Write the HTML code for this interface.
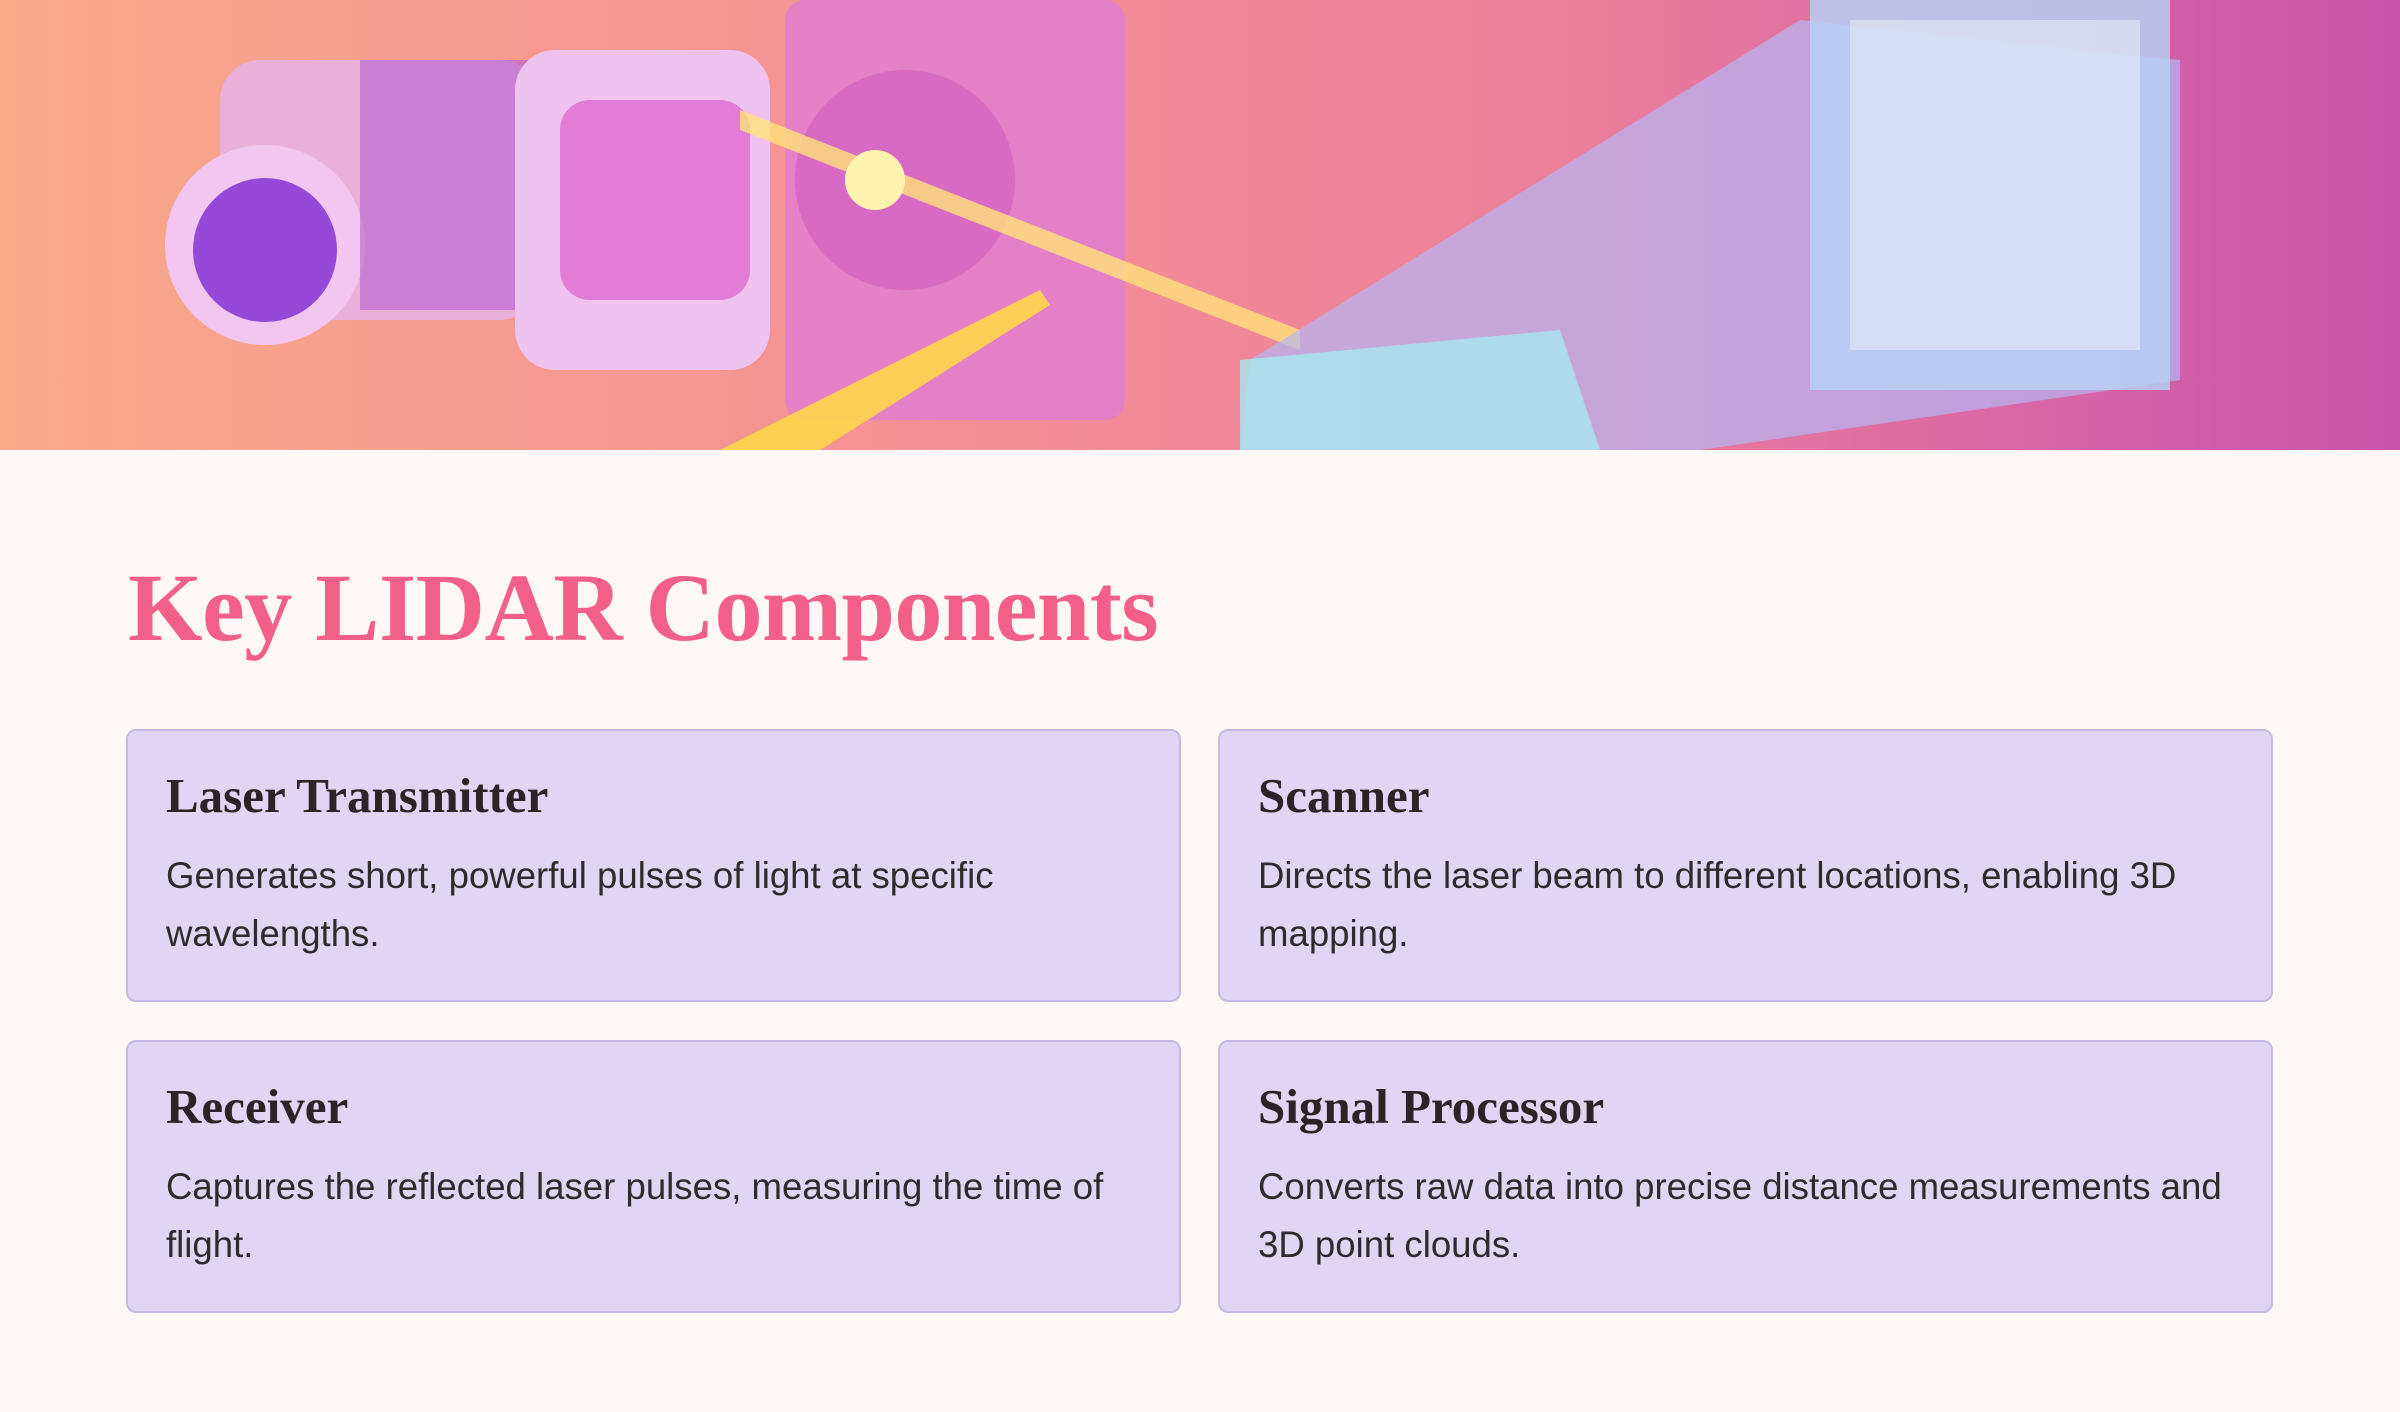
<!DOCTYPE html>
<html><head><meta charset="utf-8"><style>
*{margin:0;padding:0;box-sizing:border-box}
body{width:2400px;height:1412px;background:#fdf8f5;overflow:hidden;font-family:"Liberation Sans",sans-serif}
.banner{position:absolute;left:0;top:0;width:2400px;height:450px;background:linear-gradient(90deg,#f8a98a 0%,#f48f96 40%,#ec7f9a 65%,#d35fa8 90%,#c853a8 100%);overflow:hidden}
h1{position:absolute;left:128px;top:552px;font-family:"Liberation Serif",serif;font-weight:bold;font-size:96px;color:#f25f88;letter-spacing:-0.5px}
.card{position:absolute;width:1055px;height:273px;background:#e0d6f4;border:2px solid #c6b9e2;border-radius:10px}
.card h2{position:absolute;left:38px;top:36px;font-family:"Liberation Serif",serif;font-weight:bold;font-size:49px;color:#2a2428}
.card p{position:absolute;left:38px;top:116px;width:990px;font-size:36.6px;line-height:58px;color:#2e2a2e}
</style></head><body>
<div class="banner">
<svg width="2400" height="450" viewBox="0 0 2400 450">
<rect x="220" y="60" width="320" height="260" rx="40" fill="#e8b3e8" opacity=".85"/>
<circle cx="265" cy="245" r="100" fill="#f2c6ee"/>
<circle cx="265" cy="250" r="72" fill="#9648d8"/>
<rect x="360" y="60" width="180" height="250" fill="#b35fd0" opacity=".6"/>
<rect x="515" y="50" width="255" height="320" rx="40" fill="#eec3ef"/>
<rect x="560" y="100" width="190" height="200" rx="30" fill="#e27cd4"/>
<rect x="785" y="0" width="340" height="420" rx="20" fill="#e07ed0" opacity=".85"/>
<circle cx="905" cy="180" r="110" fill="#d86ac4"/>
<polygon points="740,110 1300,330 1300,350 740,130" fill="#ffe27a" opacity=".8"/>
<polygon points="720,450 1040,290 1050,305 820,450" fill="#ffd64a" opacity=".9"/>
<circle cx="875" cy="180" r="30" fill="#fff3b0"/>
<polygon points="1240,450 1250,360 1800,20 2180,60 2180,380 1700,450" fill="#b7b6f4" opacity=".7"/>
<rect x="1810" y="0" width="360" height="390" fill="#b6d4f6" opacity=".8"/>
<rect x="1850" y="20" width="290" height="330" fill="#dfe6f4" opacity=".7"/>
<polygon points="1240,360 1560,330 1600,450 1240,450" fill="#a8e8f0" opacity=".8"/>
</svg>
</div>
<h1>Key LIDAR Components</h1>
<div class="card" style="left:126px;top:729px"><h2>Laser Transmitter</h2><p>Generates short, powerful pulses of light at specific wavelengths.</p></div>
<div class="card" style="left:1218px;top:729px"><h2>Scanner</h2><p>Directs the laser beam to different locations, enabling 3D mapping.</p></div>
<div class="card" style="left:126px;top:1040px"><h2>Receiver</h2><p>Captures the reflected laser pulses, measuring the time of flight.</p></div>
<div class="card" style="left:1218px;top:1040px"><h2>Signal Processor</h2><p>Converts raw data into precise distance measurements and 3D point clouds.</p></div>
</body></html>
